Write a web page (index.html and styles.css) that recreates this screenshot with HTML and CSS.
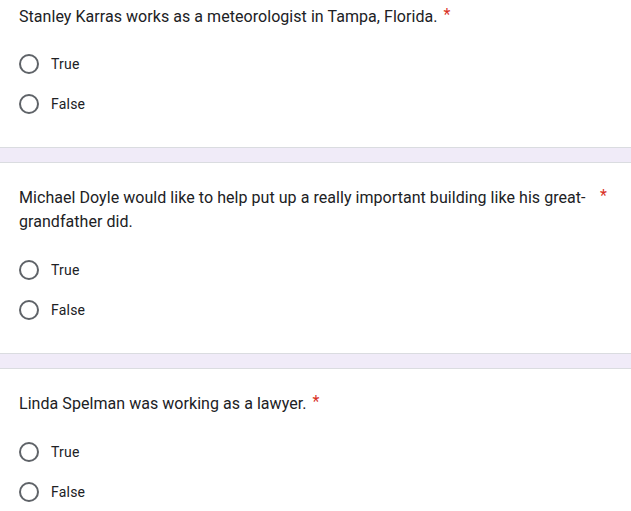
FILE: index.html
```html
<!DOCTYPE html>
<html>
<head>
	<title>Quiz</title>
	<link rel="stylesheet" href="styles.css">
</head>
<body>
	<div class="card first">
		<div class="question">
			<span class="q-text">Stanley Karras works as a meteorologist in Tampa, Florida.</span>
			<span class="req">*</span>
		</div>
		<div class="options">
			<label class="option"><span class="radio"></span><span class="opt-text">True</span></label>
			<label class="option"><span class="radio"></span><span class="opt-text">False</span></label>
		</div>
	</div>

	<div class="card">
		<div class="question">
			<span class="q-text">Michael Doyle would like to help put up a really important building like his great-grandfather did.</span>
			<span class="req">*</span>
		</div>
		<div class="options">
			<label class="option"><span class="radio"></span><span class="opt-text">True</span></label>
			<label class="option"><span class="radio"></span><span class="opt-text">False</span></label>
		</div>
	</div>

	<div class="card">
		<div class="question">
			<span class="q-text">Linda Spelman was working as a lawyer.</span>
			<span class="req">*</span>
		</div>
		<div class="options">
			<label class="option"><span class="radio"></span><span class="opt-text">True</span></label>
			<label class="option"><span class="radio"></span><span class="opt-text">False</span></label>
		</div>
	</div>
</body>
</html>
```

FILE: styles.css
```css
body {
	margin: 0;
	background-color: #f0ebf8;
	font-family: Roboto, "Liberation Sans", sans-serif;
	color: #202124;
}

.card {
	background-color: #fff;
	border-top: 1px solid #dadce0;
	border-bottom: 1px solid #dadce0;
	padding: 23px 24px 23px 19px;
	margin-bottom: 14px;
}

.card.first {
	border-top: none;
	padding-top: 5px;
}

.question {
	display: flex;
	align-items: flex-start;
	font-family: Roboto, "Open Sans", sans-serif;
	font-size: 16px;
	line-height: 24px;
	color: #202124;
	letter-spacing: 0.05px;
}

.q-text {
	max-width: 578px;
}

.req {
	color: #d93025;
	margin-left: 6px;
	font-size: 16px;
	line-height: 20px;
}

.options {
	margin-top: 16px;
}

.first .options {
	margin-top: 15px;
}

.option {
	display: flex;
	align-items: center;
	height: 40px;
}

.radio {
	box-sizing: border-box;
	width: 20px;
	height: 20px;
	border: 2px solid #5f6368;
	border-radius: 50%;
	flex-shrink: 0;
}

.opt-text {
	margin-left: 12px;
	font-size: 14px;
	letter-spacing: 0.2px;
}
```
